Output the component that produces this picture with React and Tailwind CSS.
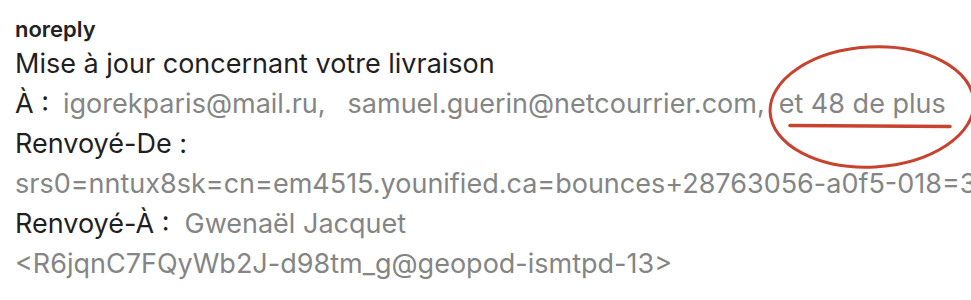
export default function App() {
  return (
    <div className="relative w-[971px] h-[300px] overflow-hidden bg-white" style={{ fontFamily: "Inter, 'Liberation Sans', sans-serif" }}>
      <div className="flex flex-col pl-[15px] pt-[15px] text-[27px] text-[#1f1f1f]">
        <div className="text-[22px] font-semibold leading-[28px] text-[#222]">noreply</div>
        <div className="leading-[40px] mt-[1px] whitespace-nowrap">Mise à jour concernant votre livraison</div>
        <div className="leading-[40px] whitespace-nowrap flex">
          <span>À :</span>
          <span className="ml-[14px] text-[#858585]">igorekparis@mail.ru,</span>
          <span className="ml-[22px] text-[#858585]">samuel.guerin@netcourrier.com,</span>
          <span className="ml-[14px] text-[#858585]">et 48 de plus</span>
        </div>
        <div className="leading-[40px] whitespace-nowrap">Renvoyé-De :</div>
        <div className="leading-[40px] whitespace-nowrap text-[#858585]">srs0=nntux8sk=cn=em4515.younified.ca=bounces+28763056-a0f5-018=3d3d=younified.ca</div>
        <div className="leading-[40px] whitespace-nowrap flex">
          <span>Renvoyé-À :</span>
          <span className="ml-[15px] text-[#858585]">Gwenaël Jacquet</span>
        </div>
        <div className="leading-[40px] whitespace-nowrap text-[#858585]">&lt;R6jqnC7FQyWb2J-d98tm_g@geopod-ismtpd-13&gt;</div>
      </div>
      <svg className="absolute left-0 top-0" width="971" height="300" viewBox="0 0 971 300" fill="none">
        <ellipse cx="872" cy="107" rx="102" ry="60" stroke="#c8432f" strokeWidth="3" transform="rotate(-3 872 107)" />
        <path d="M790 125.5 L950 126.5" stroke="#c8432f" strokeWidth="3.5" strokeLinecap="round" />
      </svg>
    </div>
  );
}
